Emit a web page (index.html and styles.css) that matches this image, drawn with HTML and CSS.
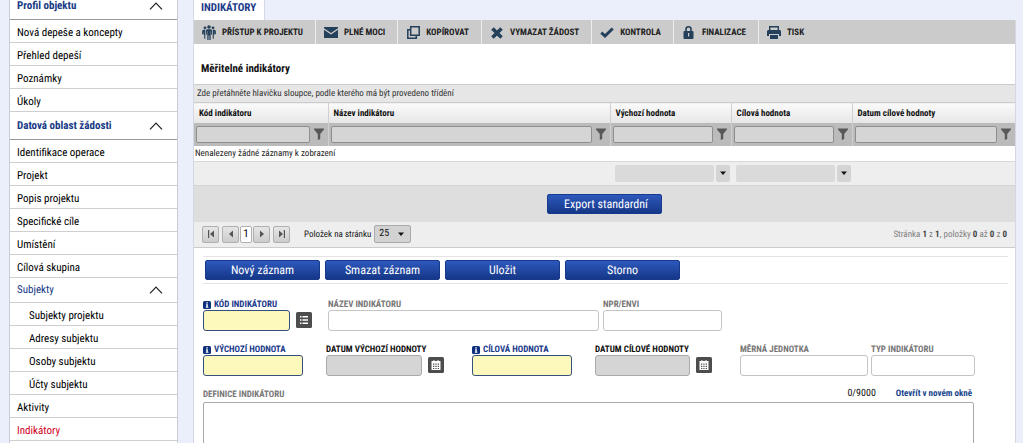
FILE: index.html
```html
<!DOCTYPE html>
<html lang="cs">
<head>
<meta charset="utf-8">
<title>Indikátory</title>
<link rel="stylesheet" href="styles.css">
</head>
<body>
<svg class="defs" aria-hidden="true">
  <symbol id="chevron" viewBox="0 0 14 8"><path d="M1 7.3 7 1l6 6.3" fill="none" stroke="#222" stroke-width="1.2"/></symbol>
  <symbol id="funnel" viewBox="0 0 10 12"><path d="M0 0.500h10v1L6.200 6v5L3.800 12V6L0 1.500z" fill="#585858"/></symbol>
  <symbol id="caret" viewBox="0 0 6 4"><path d="M0 .5h6L3 4z" fill="#111"/></symbol>
  <symbol id="calendar" viewBox="0 0 16 16"><rect width="16" height="16" rx="1.500" fill="#4d4d4d"/><path d="M3.500 4h2V3h1v1h3V3h1v1h2v9h-9z" fill="#fff"/><path d="M5 6.500h1.300v1.300H5zm2.300 0h1.300v1.300H7.300zm2.400 0H11v1.300H9.700zM5 8.700h1.300V10H5zm2.300 0h1.300V10H7.300zm2.400 0H11V10H9.700zM5 10.900h1.300v1.100H5zm2.300 0h1.300v1.100H7.300zm2.400 0H11v1.100H9.700z" fill="#4d4d4d"/></symbol>
  <symbol id="list" viewBox="0 0 16 16"><rect width="16" height="16" rx="1.500" fill="#4d4d4d"/><path d="M4 4h1.500v1.500H4zm2.500 0H12v1.500H6.500zM4 7.300h1.500v1.500H4zm2.500 0H12v1.500H6.500zM4 10.500h1.500V12H4zm2.500 0H12V12H6.500z" fill="#fff"/></symbol>
  <symbol id="info" viewBox="0 0 8 8"><rect width="8" height="8" rx="1.500" fill="#0d2f7c"/><path d="M3.300 1.300h1.500v1.200H3.300zM3 3.200h1.800v2.500h.6v1H2.800v-1h.6V4.200H3z" fill="#fff"/></symbol>
</svg>
<div class="page">
  <nav class="sidebar">
    <button class="group" type="button">Profil objektu<svg class="chevron"><use href="#chevron"/></svg></button>
    <a class="item" href="#">Nová depeše a koncepty</a>
    <a class="item" href="#">Přehled depeší</a>
    <a class="item" href="#">Poznámky</a>
    <a class="item" href="#">Úkoly</a>
    <button class="group" type="button">Datová oblast žádosti<svg class="chevron"><use href="#chevron"/></svg></button>
    <a class="item" href="#">Identifikace operace</a>
    <a class="item" href="#">Projekt</a>
    <a class="item" href="#">Popis projektu</a>
    <a class="item" href="#">Specifické cíle</a>
    <a class="item" href="#">Umístění</a>
    <a class="item" href="#">Cílová skupina</a>
    <button class="group subgroup" type="button">Subjekty<svg class="chevron"><use href="#chevron"/></svg></button>
    <a class="item nested" href="#">Subjekty projektu</a>
    <a class="item nested" href="#">Adresy subjektu</a>
    <a class="item nested" href="#">Osoby subjektu</a>
    <a class="item nested" href="#">Účty subjektu</a>
    <a class="item" href="#">Aktivity</a>
    <a class="item current" href="#">Indikátory</a>
  </nav>
  <main class="main">
    <h1 class="tab">INDIKÁTORY</h1>
    <div class="panel">
      <div class="toolbar">
        <button class="tool" type="button"><span class="icon"><svg width="14" height="15" viewBox="0 0 14 15" fill="#24405a"><circle cx="7" cy="2" r="1.800"/><circle cx="3" cy="2.800" r="1.400"/><circle cx="11" cy="2.800" r="1.400"/><path d="M5 4.300h4l1 .900v4.500h-.9V6.300h-.4V15H7.400v-4.500h-.8V15H5.300V6.300h-.4v3.400H4V5.200zM1.300 4.700h2v9H2.200V9.800H1.500V6.500l-.4 2.700H0L.3 5.500zm11.400 0h-2v9h1.100V9.800h.7V6.500l.4 2.700H14l-.3-3.700z"/></svg></span>PŘÍSTUP K PROJEKTU</button>
        <button class="tool" type="button"><span class="icon"><svg width="14" height="11" viewBox="0 0 14 11"><path d="M0 0h14v1.300L7 6 0 1.300zM0 2.800 7 7.500l7-4.700V11H0z" fill="#24405a"/></svg></span>PLNÉ MOCI</button>
        <button class="tool" type="button"><span class="icon"><svg width="13" height="13" viewBox="0 0 13 13" fill="none" stroke="#24405a" stroke-width="1.500"><path d="M3.700.8h8.500v8.500H3.700zM3.500 3.700H.8v8.500h8.500V9.500"/></svg></span>KOPÍROVAT</button>
        <button class="tool" type="button"><span class="icon"><svg width="12" height="12" viewBox="0 0 12 12"><path d="m1.500 1.500 9 9M10.500 1.500l-9 9" stroke="#24405a" stroke-width="3.600"/></svg></span>VYMAZAT ŽÁDOST</button>
        <button class="tool" type="button"><span class="icon"><svg width="14" height="11" viewBox="0 0 14 11"><path d="M1.300 5.700 5 9 12.700 1.500" fill="none" stroke="#24405a" stroke-width="3"/></svg></span>KONTROLA</button>
        <button class="tool" type="button"><span class="icon"><svg width="11" height="13" viewBox="0 0 11 13"><path d="M3 6V3.300a2.500 2.500 0 0 1 5 0V6" fill="none" stroke="#24405a" stroke-width="1.600"/><rect x=".5" y="5" width="10" height="8" rx="1" fill="#24405a"/><path d="M5 7h1.200v3.500H5z" fill="#cbcbcb"/></svg></span>FINALIZACE</button>
        <button class="tool" type="button"><span class="icon"><svg width="14" height="13" viewBox="0 0 14 13"><path d="M2.700 4.500V.7h8.600v3.800" fill="none" stroke="#24405a" stroke-width="1.400"/><path d="M1 4h12l1 1v5h-2V8H2v2H0V5z" fill="#24405a"/><path d="M3 9h8v4H3z" fill="#24405a"/></svg></span>TISK</button>
      </div>
      <h2 class="title">Měřitelné indikátory</h2>
      <div class="groupbar">Zde přetáhněte hlavičku sloupce, podle kterého má být provedeno třídění</div>
      <table class="grid">
        <colgroup><col class="c-code"><col><col class="c-value"><col class="c-value"><col class="c-date"></colgroup>
        <thead>
          <tr class="heads"><th>Kód indikátoru</th><th>Název indikátoru</th><th>Výchozí hodnota</th><th>Cílová hodnota</th><th>Datum cílové hodnoty</th></tr>
          <tr class="filters">
            <td><div class="filter"><input type="text" aria-label="Filtr kód"><button type="button" aria-label="Filtrovat"><svg><use href="#funnel"/></svg></button></div></td>
            <td><div class="filter"><input type="text" aria-label="Filtr název"><button type="button" aria-label="Filtrovat"><svg><use href="#funnel"/></svg></button></div></td>
            <td><div class="filter"><input type="text" aria-label="Filtr výchozí hodnota"><button type="button" aria-label="Filtrovat"><svg><use href="#funnel"/></svg></button></div></td>
            <td><div class="filter"><input type="text" aria-label="Filtr cílová hodnota"><button type="button" aria-label="Filtrovat"><svg><use href="#funnel"/></svg></button></div></td>
            <td><div class="filter"><input type="text" aria-label="Filtr datum"><button type="button" aria-label="Filtrovat"><svg><use href="#funnel"/></svg></button></div></td>
          </tr>
        </thead>
        <tbody><tr class="empty"><td colspan="5">Nenalezeny žádné záznamy k zobrazení</td></tr></tbody>
        <tfoot><tr class="sums">
          <td></td><td></td>
          <td><div class="combo"><input type="text" aria-label="Souhrn výchozí hodnota"><button type="button" aria-label="Vybrat"><svg><use href="#caret"/></svg></button></div></td>
          <td><div class="combo"><input type="text" aria-label="Souhrn cílová hodnota"><button type="button" aria-label="Vybrat"><svg><use href="#caret"/></svg></button></div></td>
          <td></td>
        </tr></tfoot>
      </table>
      <div class="export"><button class="primary" type="button">Export standardní</button></div>
      <div class="pager">
        <button class="page-btn" type="button" aria-label="První"><svg viewBox="0 0 8 8"><path d="M1 0h1.200v8H1zM7 .5v7L3 4z"/></svg></button>
        <button class="page-btn" type="button" aria-label="Předchozí"><svg viewBox="0 0 8 8"><path d="M6 .5v7L2 4z"/></svg></button>
        <button class="page-btn active" type="button">1</button>
        <button class="page-btn" type="button" aria-label="Další"><svg viewBox="0 0 8 8"><path d="M2 .5v7L6 4z"/></svg></button>
        <button class="page-btn" type="button" aria-label="Poslední"><svg viewBox="0 0 8 8"><path d="M5.800 0H7v8H5.800zM1 .5v7L5 4z"/></svg></button>
        <label class="size-label" for="size">Položek na stránku</label>
        <span class="size"><select id="size"><option>25</option></select><svg><use href="#caret"/></svg></span>
        <p class="status">Stránka <b>1</b> z <b>1</b>, položky <b>0</b> až <b>0</b> z <b>0</b></p>
      </div>
      <form class="form">
        <div class="actions">
          <button class="primary" type="button">Nový záznam</button>
          <button class="primary" type="button">Smazat záznam</button>
          <button class="primary" type="button">Uložit</button>
          <button class="primary" type="button">Storno</button>
        </div>
        <div class="row row-a">
          <div class="field required code"><label for="kod"><svg><use href="#info"/></svg>KÓD INDIKÁTORU</label><div class="control"><input id="kod" type="text"><button class="pick" type="button" aria-label="Vybrat"><svg><use href="#list"/></svg></button></div></div>
          <div class="field name"><label for="nazev">NÁZEV INDIKÁTORU</label><input id="nazev" type="text"></div>
          <div class="field"><label for="npr">NPR/ENVI</label><input id="npr" type="text"></div>
        </div>
        <div class="row row-b">
          <div class="field required value"><label for="vych"><svg><use href="#info"/></svg>VÝCHOZÍ HODNOTA</label><input id="vych" type="text"></div>
          <div class="field date"><label for="dvych">DATUM VÝCHOZÍ HODNOTY</label><div class="control"><input id="dvych" type="text"><button class="pick" type="button" aria-label="Kalendář"><svg><use href="#calendar"/></svg></button></div></div>
          <div class="field required value"><label for="cil"><svg><use href="#info"/></svg>CÍLOVÁ HODNOTA</label><input id="cil" type="text"></div>
          <div class="field date"><label for="dcil">DATUM CÍLOVÉ HODNOTY</label><div class="control"><input id="dcil" type="text"><button class="pick" type="button" aria-label="Kalendář"><svg><use href="#calendar"/></svg></button></div></div>
          <div class="field unit"><label for="mj">MĚRNÁ JEDNOTKA</label><input id="mj" type="text"></div>
          <div class="field"><label for="typ">TYP INDIKÁTORU</label><input id="typ" type="text"></div>
        </div>
        <div class="definition">
          <div class="def-head"><label for="def">DEFINICE INDIKÁTORU</label><span class="count">0/9000</span><a href="#">Otevřít v novém okně</a></div>
          <textarea id="def"></textarea>
        </div>
      </form>
    </div>
  </main>
</div>
</body>
</html>
```
FILE: styles.css
```css
* { box-sizing: border-box; }

body {
  margin: 0;
  height: 100vh;
  overflow: hidden;
  background: #ebeffb;
  color: #111;
  font: 9px/14px "Roboto Condensed", Roboto, sans-serif;
  text-rendering: geometricPrecision;
}

button, input, select, textarea { font: inherit; color: inherit; margin: 0; border-radius: 0; text-rendering: inherit; }
button { padding: 0; border: 0; background: none; }
h1, h2, p { margin: 0; }
a { text-decoration: none; }
svg { display: block; flex: none; }
.defs { position: absolute; width: 0; height: 0; }

.page { display: flex; gap: 15px; height: 100%; padding: 0 7px 0 9px; }

/* Sidebar */
.sidebar {
  display: flex;
  flex-direction: column;
  flex: none;
  width: 169px;
  border: 1px solid #c9ccd3;
  border-width: 0 1px;
  background: #fff;
  font-size: 11px;
}
.item, .group {
  display: flex;
  flex: none;
  align-items: center;
  height: 23px;
  padding: 4px 14px 0 7px;
  border-bottom: 1px solid #cfcfcf;
  color: #000;
}
.group {
  justify-content: space-between;
  height: 28px;
  padding-top: 0;
  border-bottom-color: #999;
  color: #173a86;
  font-weight: bold;
}
.group:first-child { height: 20px; padding-bottom: 8px; }
.subgroup { height: 25px; border-bottom-color: #cfcfcf; font-weight: normal; }
.nested { padding-left: 19px; }
.item.current { color: #d0021b; }
.chevron { width: 14px; height: 8px; }

/* Main panel */
.main { flex: 1; min-width: 0; }
.tab {
  width: 72px;
  height: 20px;
  padding: 1px 0 0 7px;
  border: 1px solid #d4d8e2;
  border-width: 0 1px;
  background: #fff;
  color: #1b3a8a;
  font-size: 11px;
  font-weight: bold;
}
.panel { border: 1px solid #d4d8e2; border-width: 0 1px; background: #fff; }

.toolbar { display: flex; height: 24px; background: #cbcbcb; }
.tool {
  display: flex;
  align-items: center;
  gap: 6px;
  padding: 1px 12px 0 8px;
  border-right: 1px solid #eee;
  color: #222;
  font-weight: bold;
}
.tool:last-child { border-right: 0; }
.icon { display: flex; justify-content: center; width: 14px; }

.title { padding: 17px 7px 0; font-size: 11px; line-height: 16px; height: 40px; }

.groupbar {
  height: 18px;
  padding: 2px 3px;
  border-top: 1px solid #ccc;
  background: #e6e6e6;
  color: #333;
}

.grid { width: 100%; border-collapse: collapse; table-layout: fixed; }
.grid td, .grid th { padding: 0; }
.c-code { width: 134px; }
.c-value { width: 121px; }
.c-date { width: 163px; }
.grid .heads th {
  height: 20px;
  padding: 2px 5px 0;
  border-top: 1px solid #ccc;
  background: linear-gradient(#fafafa, #e6e6e6);
  text-align: left;
}
.heads th + th, .filters td + td { border-left: 1px solid #d0d0d0; }
.filters { background: #bbb; }
.filters td { height: 23px; }
.filter { display: flex; align-items: center; gap: 4px; padding: 0 4px 0 2px; }
.filter input {
  flex: 1;
  min-width: 0;
  height: 17px;
  border: 1px solid #8e8e8e;
  border-radius: 2px;
  background: #d5d5d5;
}
.filter svg { width: 10px; height: 12px; }
.grid .empty td { height: 15px; padding: 1px 0 0 1px; color: #222; }
.sums { background: #eee; }
.sums td { height: 24px; border-top: 1px solid #d8d8d8; border-bottom: 1px solid #d4d4d4; }
.combo { display: flex; gap: 2px; padding: 0 1px 0 5px; }
.combo input { flex: 1; min-width: 0; height: 17px; border: 0; border-radius: 2px; background: #dadada; }
.combo button { width: 14px; height: 17px; border-radius: 2px; background: #d4d4d4; }
.combo svg { width: 6px; height: 4px; margin: auto; }

.primary {
  width: 115px;
  height: 20px;
  padding-top: 1px;
  border: 1px solid #173a8c;
  border-radius: 2px;
  background: linear-gradient(#2d58bd, #153787);
  color: #fff;
  font-size: 12px;
  line-height: 16px;
}
.export { display: flex; align-items: center; justify-content: center; height: 36px; background: #dedede; }
.export .primary { padding-left: 3px; }

.pager {
  display: flex;
  align-items: center;
  gap: 3px;
  height: 26px;
  padding: 0 8px 0 8px;
  border-bottom: 1px solid #ccc;
  background: #eee;
}
.page-btn {
  width: 17px;
  height: 17px;
  border: 1px solid #b0b0b0;
  border-radius: 2px;
  background: linear-gradient(#e6e6e6, #ccc);
  color: #000;
  font-size: 11px;
}
.page-btn svg { width: 8px; height: 8px; margin: auto; fill: #555; }
.page-btn.active { width: 12px; margin: 0 -2px; background: #fff; }
.size-label { margin-left: 11px; padding-top: 1px; color: #222; }
.size { display: grid; align-items: center; }
.size select {
  grid-area: 1 / 1;
  width: 37px;
  height: 18px;
  padding: 0 4px;
  appearance: none;
  border: 1px solid #aaa;
  border-radius: 2px;
  background: #d2d2d2;
  font-size: 10px;
}
.size svg { grid-area: 1 / 1; justify-self: end; width: 6px; height: 4px; margin-right: 7px; pointer-events: none; }
.status { margin-left: auto; padding-top: 1px; color: #808080; }
.status b { color: #444; }

/* Form */
.form { padding: 8px 7px 0 9px; }
.actions {
  display: flex;
  gap: 5px;
  height: 28px;
  padding: 3px 2px;
  border: 1px solid #e4e4e4;
  border-width: 1px 0;
}
.row { display: grid; align-items: end; }
.row-a { grid-template-columns: 125px minmax(60px, 275px) 119px; height: 47px; }
.row-b { grid-template-columns: 123px 146px 123px 145px 131px 104px; height: 45px; }
.field { display: flex; flex-direction: column; min-width: 0; }
.code { padding-right: 16px; }
.name { padding-right: 4px; }
.value { padding-right: 23px; }
.date { padding-right: 28px; }
.unit { padding-right: 3px; }
.field label, .def-head label {
  display: flex;
  align-items: center;
  gap: 3px;
  height: 10px;
  color: #777;
  line-height: 10px;
  font-weight: bold;
  white-space: nowrap;
}
.field label svg { width: 8px; height: 8px; }
.field input {
  width: 100%;
  height: 21px;
  border: 1px solid #c4c4c4;
  border-radius: 3px;
  background: #fff;
}
.field.required label { color: #1b3a8a; }
.required input { border-color: #35507f; background: #fdf9bd; }
.field.date label { color: #111; }
.date input { border-color: #aaa; background: #d5d5d5; }
.control { display: flex; align-items: center; gap: 6px; }
.control input { flex: 1; min-width: 0; }
.pick svg { width: 16px; height: 16px; }

.definition { width: 771px; max-width: 100%; padding-top: 10px; }
.def-head { display: flex; align-items: center; height: 16px; }
.def-head label { padding-top: 3px; }
.count { margin-left: auto; margin-right: 20px; font-size: 10px; }
.def-head a { margin-right: 2px; color: #15448c; font-weight: bold; }
.definition textarea {
  display: block;
  width: 100%;
  height: 120px;
  border: 1px solid #aaa;
  border-radius: 2px;
  background: #fff;
  resize: none;
}
```
